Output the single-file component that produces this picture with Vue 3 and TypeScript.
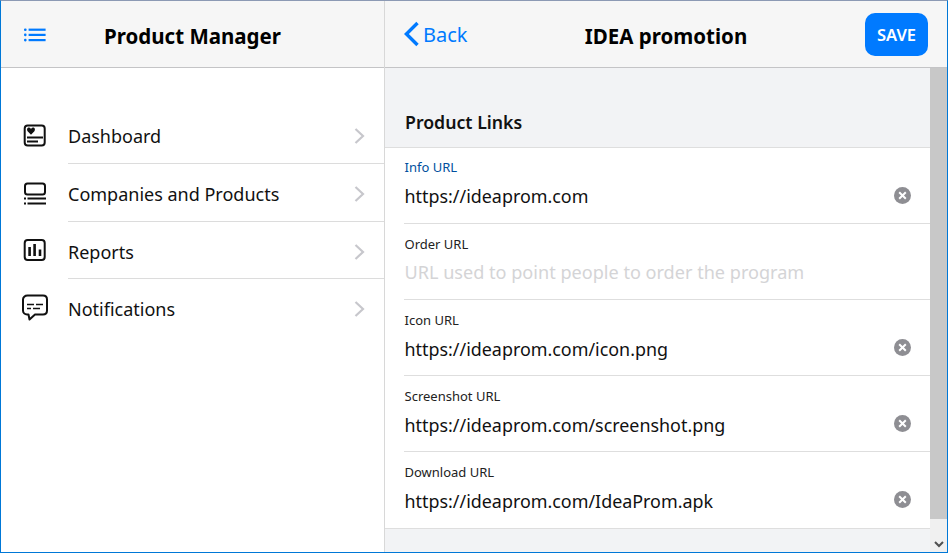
<script setup lang="ts">
interface MenuItem { label: string; icon: string }
interface Field { label: string; value: string; placeholder?: string; blue?: boolean }
const menu: MenuItem[] = [
  { label: 'Dashboard', icon: 'dash' },
  { label: 'Companies and Products', icon: 'comp' },
  { label: 'Reports', icon: 'rep' },
  { label: 'Notifications', icon: 'note' },
]
const fields: Field[] = [
  { label: 'Info URL', value: 'https://ideaprom.com', blue: true },
  { label: 'Order URL', value: '', placeholder: 'URL used to point people to order the program' },
  { label: 'Icon URL', value: 'https://ideaprom.com/icon.png' },
  { label: 'Screenshot URL', value: 'https://ideaprom.com/screenshot.png' },
  { label: 'Download URL', value: 'https://ideaprom.com/IdeaProm.apk' },
]
</script>

<template>
  <div class="window">
    <aside class="left">
      <header class="head left-head">
        <button class="menu-btn" aria-label="Menu">
          <svg width="22" height="14" viewBox="0 0 22 14">
            <g fill="#007aff">
              <rect x="0" y="0.4" width="2.6" height="2.6" rx="1.1" />
              <rect x="0" y="5.6" width="2.6" height="2.6" rx="1.1" />
              <rect x="0" y="10.8" width="2.6" height="2.6" rx="1.1" />
              <rect x="4.6" y="0.6" width="17" height="2.2" />
              <rect x="4.6" y="5.8" width="17" height="2.2" />
              <rect x="4.6" y="11" width="17" height="2.2" />
            </g>
          </svg>
        </button>
        <h1 class="title left-title">Product Manager</h1>
      </header>
      <ul class="menu">
        <li v-for="m in menu" :key="m.label" class="menu-row">
          <span class="menu-icon">
            <svg v-if="m.icon === 'dash'" width="24" height="24" viewBox="0 0 24 24" fill="none" stroke="#111">
              <rect x="2.7" y="2.5" width="20" height="20" rx="3" stroke-width="2" />
              <path d="M9 11.8 L5.6 8.2 C4.3 6.2 5.6 4.3 7.2 4.6 C8 4.8 8.6 5.3 9 6 C9.4 5.3 10 4.8 10.8 4.6 C12.4 4.3 13.7 6.2 12.4 8.2 Z" fill="#111" stroke="none" />
              <path d="M5 14.5 H21 M5 18.5 H16" stroke-width="1.9" />
            </svg>
            <svg v-else-if="m.icon === 'comp'" width="24" height="24" viewBox="0 0 24 24" fill="none" stroke="#111">
              <rect x="3" y="2.5" width="20" height="11" rx="2.5" stroke-width="2" />
              <path d="M5.5 17.5 H24 M5.5 22.5 H24" stroke-width="2" />
              <path d="M2 17.5 H4 M2 22.5 H4" stroke-width="2" />
            </svg>
            <svg v-else-if="m.icon === 'rep'" width="24" height="24" viewBox="0 0 24 24" fill="none" stroke="#111">
              <rect x="2.7" y="2" width="20" height="20" rx="3" stroke-width="2" />
              <path d="M7.6 18 V9 M12.6 18 V6 M18 18 V11.5" stroke-width="2.6" />
            </svg>
            <svg v-else width="28" height="27" viewBox="0 0 28 27" fill="none" stroke="#111">
              <path d="M5.5 1.5 H21 C23.5 1.5 25 3.2 25 5.5 V16.5 C25 18.8 23.5 20.5 21 20.5 H13 L7.5 25.5 L6.5 20.5 H5 C2.8 20.5 1 18.8 1 16.5 V5.5 C1 3.2 2.8 1.5 5.5 1.5 Z" stroke-width="2" stroke-linejoin="round" />
              <path d="M5 10.5 H12 M14 10.5 H21 M5 14.5 H9 M11 14.5 H18" stroke-width="1.6" />
            </svg>
          </span>
          <div class="menu-body">
            <span class="menu-label">{{ m.label }}</span>
            <svg class="chev" width="11" height="16" viewBox="0 0 11 16" fill="none" stroke="#c7c7cc" stroke-width="2.2">
              <path d="M1.5 1 L9 8 L1.5 15" />
            </svg>
          </div>
        </li>
      </ul>
    </aside>

    <main class="right">
      <header class="head right-head">
        <button class="back">
          <svg width="17" height="26" viewBox="0 0 17 26" fill="none" stroke="#007aff" stroke-width="3.4">
            <path d="M13.5 2 L2.4 13 L13.5 24" />
          </svg>
          <span>Back</span>
        </button>
        <h1 class="title right-title">IDEA promotion</h1>
        <button class="save">SAVE</button>
      </header>
      <div class="scroll-area">
        <div class="content">
          <h2 class="section">Product Links</h2>
          <div class="fields">
            <div v-for="f in fields" :key="f.label" class="field">
              <div class="field-inner">
                <label class="field-label" :class="{ blue: f.blue }">{{ f.label }}</label>
                <div class="field-row">
                  <span v-if="f.value" class="value">{{ f.value }}</span>
                  <span v-else class="placeholder">{{ f.placeholder }}</span>
                  <svg v-if="f.value" class="clear" width="17" height="17" viewBox="0 0 17 17">
                    <circle cx="8.5" cy="8.5" r="8.5" fill="#8e8e93" />
                    <path d="M5.2 5.2 L11.8 11.8 M11.8 5.2 L5.2 11.8" stroke="#fff" stroke-width="2" />
                  </svg>
                </div>
              </div>
            </div>
          </div>
        </div>
        <div class="scrollbar">
          <div class="thumb"></div>
          <svg class="arrow" width="10" height="7" viewBox="0 0 10 7" fill="none" stroke="#505050" stroke-width="2">
            <path d="M1 1 L5 5 L9 1" />
          </svg>
        </div>
      </div>
    </main>
  </div>
</template>

<style>
html, body { margin: 0; background: #fff; overflow: hidden; }
</style>

<style scoped>
.window {
  box-sizing: border-box;
  width: 948px;
  height: 553px;
  display: flex;
  border: 1px solid #0078d7;
  border-top-color: #8c9ab4;
  font-family: "Noto Sans", "Open Sans", sans-serif;
  color: #000;
  overflow: hidden;
  background: #fff;
}
.left {
  box-sizing: border-box;
  width: 384px;
  flex: none;
  border-right: 1px solid #d8d8d8;
}
.right { flex: 1; min-width: 0; display: flex; flex-direction: column; }
.head {
  box-sizing: border-box;
  height: 67px;
  flex: none;
  background: #f6f6f6;
  border-bottom: 1px solid #c4c4c6;
  display: flex;
  align-items: center;
}
.left-head { position: relative; }
.menu-btn { border: 0; background: none; padding: 0; margin: 1px 0 0 23px; display: flex; height: 14px; }
.title { margin: 0; font-size: 20.5px; font-weight: 700; line-height: 28px; white-space: nowrap; }
.left-title { position: absolute; left: 0; right: 0; top: 21px; text-align: center; }
.menu { list-style: none; margin: 0; padding: 38px 0 0; }
.menu-row { display: flex; height: 58px; }
.menu-row:nth-child(3) { height: 57px; }
.menu-row:nth-child(3) .menu-body { padding-top: 3px; }
.menu-icon { width: 67px; flex: none; display: flex; align-items: center; padding-left: 21px; box-sizing: border-box; padding-bottom: 1px; }
.menu-body {
  flex: 1;
  display: flex;
  align-items: center;
  justify-content: space-between;
  border-bottom: 1px solid #dcdcdc;
  padding: 2px 19px 0 0;
}
.menu-row:last-child .menu-body { border-bottom: 0; }
.menu-label { font-size: 18px; line-height: 24px; color: #111; }
.chev { flex: none; }
.right-head { padding: 0 19px; justify-content: space-between; position: relative; }
.back {
  display: flex; align-items: center; gap: 2px; border: 0; background: none; padding: 0;
  color: #007aff; font: inherit; font-size: 20px; height: 30px;
}
.right-title { position: absolute; left: 0; right: 0; top: 21px; text-align: center; pointer-events: none; }
.save {
  width: 63px; height: 43px; border: 0; border-radius: 10px; background: #007aff; color: #fff;
  font: inherit; font-size: 16.5px; font-weight: 600;
}
.scroll-area { flex: 1; min-height: 0; display: flex; }
.content { flex: 1; min-width: 0; background: #f2f3f5; }
.section { margin: 0; padding: 42px 19px 0 20px; height: 79px; box-sizing: border-box; font-size: 17.7px; font-weight: 600; line-height: 24px; color: #111; }
.fields { background: #fff; border-top: 1px solid #dedede; border-bottom: 1px solid #dedede; }
.field { padding-left: 19px; box-sizing: border-box; height: 76.12px; }
.field-inner { box-sizing: border-box; height: 76.12px; border-bottom: 1px solid #dedede; padding: 10.48px 0 0 0.5px; }
.field:last-child, .field:last-child .field-inner { height: 75.6px; }
.field:last-child .field-inner { border-bottom: 0; }
.field-label { display: block; font-size: 13px; line-height: 19px; color: #222; }
.field-label.blue { color: #004f9e; }
.field-row { display: flex; align-items: center; justify-content: space-between; height: 30px; margin-top: 3.84px; padding-right: 19.5px; }
.value { font-size: 17.9px; line-height: 26px; color: #111; }
.placeholder { font-size: 18.1px; line-height: 26px; color: #d4d4d6; }
.clear { flex: none; margin-bottom: 2px; }
.scrollbar { width: 17px; flex: none; background: #f0f0f0; position: relative; }
.thumb { height: 451px; background: #c8c8c8; }
.arrow { position: absolute; left: 4px; bottom: 4px; }
</style>
